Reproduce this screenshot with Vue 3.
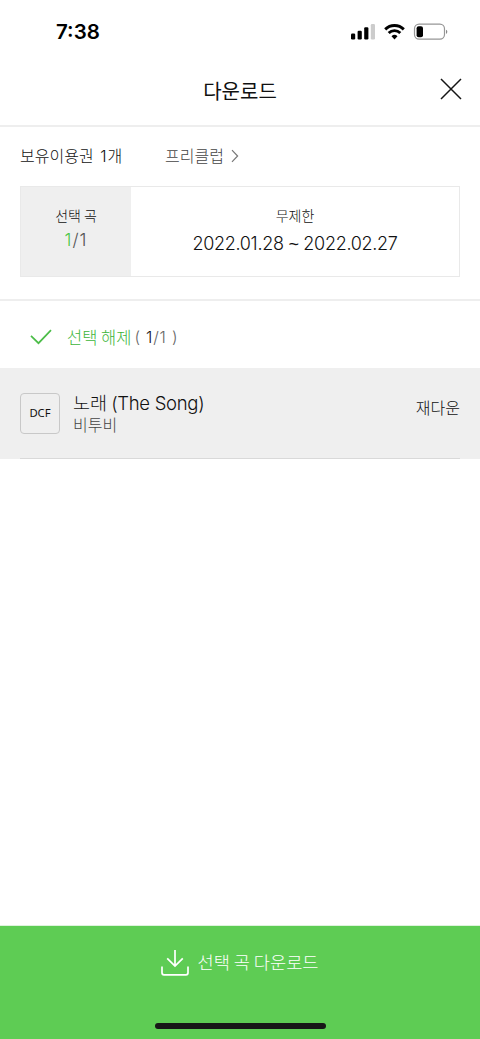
<script setup>
const ticket = { name: '프리클럽', count: 1, kind: '무제한', from: '2022.01.28', to: '2022.02.27' }
const songs = [{ title: '노래', english: '(The Song)', artist: '비투비', format: 'DCF', state: '재다운' }]
</script>

<template>
  <div class="screen">
    <div class="status">
      <span class="time">7:38</span>
      <svg class="indicators" width="100" height="20" viewBox="0 0 100 20">
        <rect x="1" y="11.5" width="4.2" height="6" rx="1.2" />
        <rect x="7.6" y="8.8" width="4.2" height="8.7" rx="1.2" />
        <rect x="14.2" y="5.2" width="4.2" height="12.3" rx="1.2" />
        <rect x="20.8" y="2" width="4.2" height="15.5" rx="1.2" fill="#ccc" />
        <g fill="none" stroke="#000" stroke-width="2.9">
          <path d="M35.2 7.4a13.2 13.2 0 0 1 18.6 0" />
          <path d="M38.7 11a8.3 8.3 0 0 1 11.6 0" />
        </g>
        <path d="M44.5 17.4l-3-3.1a4.3 4.3 0 0 1 6 0z" />
        <rect x="64.5" y="2.2" width="30" height="15" rx="4.6" fill="#fff" stroke="#969696" stroke-width="1.2" />
        <rect x="66.6" y="4.2" width="6.4" height="11" rx="2" />
        <path d="M96 7.7v4.2c1.8-.7 1.8-3.5 0-4.2z" fill="#888" />
      </svg>
    </div>

    <header class="header">
      <h1>다운로드</h1>
      <svg class="close" width="24" height="24" viewBox="0 0 24 24">
        <path d="M2 2l20 20M22 2L2 22" fill="none" stroke="#151515" stroke-width="1.5" />
      </svg>
    </header>

    <section class="pass">
      <div class="pass-head">
        <span class="owned">보유이용권 <i>{{ ticket.count }}</i>개</span>
        <span class="name">{{ ticket.name }}</span>
        <svg width="8" height="14" viewBox="0 0 8 14">
          <path d="M1 1.2L6.6 7 1 12.8" fill="none" stroke="#777" stroke-width="1.2" />
        </svg>
      </div>
      <div class="pass-box">
        <div class="selected">
          <span class="label">선택 곡</span>
          <span class="num"><b>1</b>/1</span>
        </div>
        <div class="period">
          <span class="label">{{ ticket.kind }}</span>
          <span class="dates">{{ ticket.from }} <i>~</i> {{ ticket.to }}</span>
        </div>
      </div>
    </section>

    <div class="toggle">
      <svg width="22" height="16" viewBox="0 0 22 16">
        <path d="M1 6.8l7.5 7.4L21 1.2" fill="none" stroke="#4cbd49" stroke-width="1.7" />
      </svg>
      <span class="clear">선택 해제</span>
      <span class="tally">( <b>1</b>/1 )</span>
    </div>

    <ul class="songs">
      <li v-for="song in songs" :key="song.title">
        <span class="format">{{ song.format }}</span>
        <div class="info">
          <span class="title">{{ song.title }} <i>{{ song.english }}</i></span>
          <span class="artist">{{ song.artist }}</span>
        </div>
        <span class="state">{{ song.state }}</span>
      </li>
    </ul>

    <footer class="download">
      <div class="action">
        <svg width="28" height="28" viewBox="0 0 28 28">
          <path d="M14 1v16M6.2 9.3L14 17l7.8-7.7M1 17.5v6.3q0 2 2 2h22q2 0 2-2v-6.3" fill="none" stroke="#fff" stroke-width="1.7" />
        </svg>
        <span>선택 곡 다운로드</span>
      </div>
      <div class="home"></div>
    </footer>
  </div>
</template>

<style>
body {
  margin: 0;
  background: #fff;
}
</style>

<style scoped>
.screen {
  display: flex;
  flex-direction: column;
  width: 480px;
  height: 1039px;
  overflow: hidden;
  background: #fff;
  color: #111;
  font-family: "Noto Sans CJK KR", sans-serif;
  font-weight: 300;
  white-space: nowrap;
}
i, b {
  font-style: normal;
  font-weight: inherit;
}
.status {
  display: flex;
  justify-content: space-between;
  height: 56px;
  padding: 0 30px 0 56px;
  box-sizing: border-box;
}
.time {
  margin-top: 20px;
  font: 600 20.5px/24px Inter, sans-serif;
  color: #000;
}
.indicators {
  margin-top: 22px;
}
.header {
  display: flex;
  align-items: center;
  height: 71px;
  padding: 0 17px 0 51px;
  box-sizing: border-box;
  border-bottom: 2px solid #eee;
}
h1 {
  flex: 1;
  margin: 0;
  padding-right: 10px;
  text-align: center;
  font-size: 20px;
  line-height: 28px;
  font-weight: 400;
  color: #111;
}
.close {
  margin-top: -3px;
}
.pass {
  height: 174px;
  padding: 16px 20px 0;
  box-sizing: border-box;
  border-bottom: 2px solid #eee;
}
.pass-head {
  display: flex;
  align-items: center;
  height: 24px;
  font-size: 16px;
  line-height: 24px;
}
.pass-head svg {
  margin-top: 1px;
}
.owned {
  width: 145px;
}
.owned i, .num, .dates, .tally, .title i {
  font-family: Inter, sans-serif;
  font-weight: 300;
}
.owned i {
  margin: 0 1px 0 3px;
}
.name {
  margin-right: 7px;
  color: #444;
}
.pass-box {
  display: flex;
  height: 91px;
  margin-top: 19px;
  border: 1px solid #e9e9e9;
  box-sizing: border-box;
}
.selected, .period {
  display: flex;
  flex-direction: column;
  align-items: center;
  padding-top: 18px;
}
.selected {
  width: 110px;
  background: #efefef;
}
.period {
  flex: 1;
}
.label {
  font-size: 14px;
  line-height: 20px;
}
.num {
  margin-top: 4px;
  font-size: 17.5px;
  line-height: 22px;
  letter-spacing: 1px;
  color: #555;
}
.num b {
  color: #4cc747;
}
.dates {
  margin-top: 7px;
  font-size: 18px;
  line-height: 24px;
  letter-spacing: -0.3px;
}
.dates i {
  font-family: "Liberation Sans", sans-serif;
}
.toggle {
  display: flex;
  align-items: center;
  height: 67px;
  padding: 5px 0 0 30px;
  box-sizing: border-box;
}
.clear {
  margin-left: 15px;
  font-size: 16.5px;
  line-height: 24px;
  color: #3cb539;
}
.tally {
  margin-left: 3px;
  font-size: 16px;
  line-height: 22px;
  letter-spacing: 0.8px;
  color: #666;
}
.tally b {
  color: #111;
}
.songs {
  margin: 0;
  padding: 0;
  list-style: none;
}
.songs li {
  display: flex;
  position: relative;
  height: 91px;
  padding: 0 20px;
  box-sizing: border-box;
  background: #efefef;
}
.songs li::after {
  content: "";
  position: absolute;
  left: 20px;
  right: 20px;
  bottom: 0;
  height: 1px;
  background: #d9d9d9;
}
.format {
  width: 40px;
  height: 41px;
  margin: 25px 13px 0 0;
  box-sizing: border-box;
  border: 1px solid #c8c8c8;
  border-radius: 4px;
  text-align: center;
  font: 400 11.3px/38px "Noto Sans", sans-serif;
}
.info {
  display: flex;
  flex: 1;
  flex-direction: column;
  padding-top: 22px;
}
.title {
  font-size: 18.5px;
  line-height: 24px;
}
.title i {
  letter-spacing: -0.3px;
}
.artist {
  font-size: 16px;
  line-height: 19px;
  color: #444;
}
.state {
  margin-top: 27px;
  font-size: 16px;
  line-height: 24px;
}
.download {
  display: flex;
  flex-direction: column;
  align-items: center;
  justify-content: space-between;
  height: 114px;
  margin-top: auto;
  padding: 23px 0 10px;
  box-sizing: border-box;
  border-top: 1px solid #def3dc;
  background: #5ecc54;
  color: #fff;
}
.action {
  display: flex;
  align-items: center;
  gap: 8px;
  font-size: 17.6px;
  line-height: 24px;
}
.action span {
  padding-bottom: 2px;
}
.home {
  width: 171px;
  height: 6px;
  border-radius: 3px;
  background: #171717;
}
</style>
